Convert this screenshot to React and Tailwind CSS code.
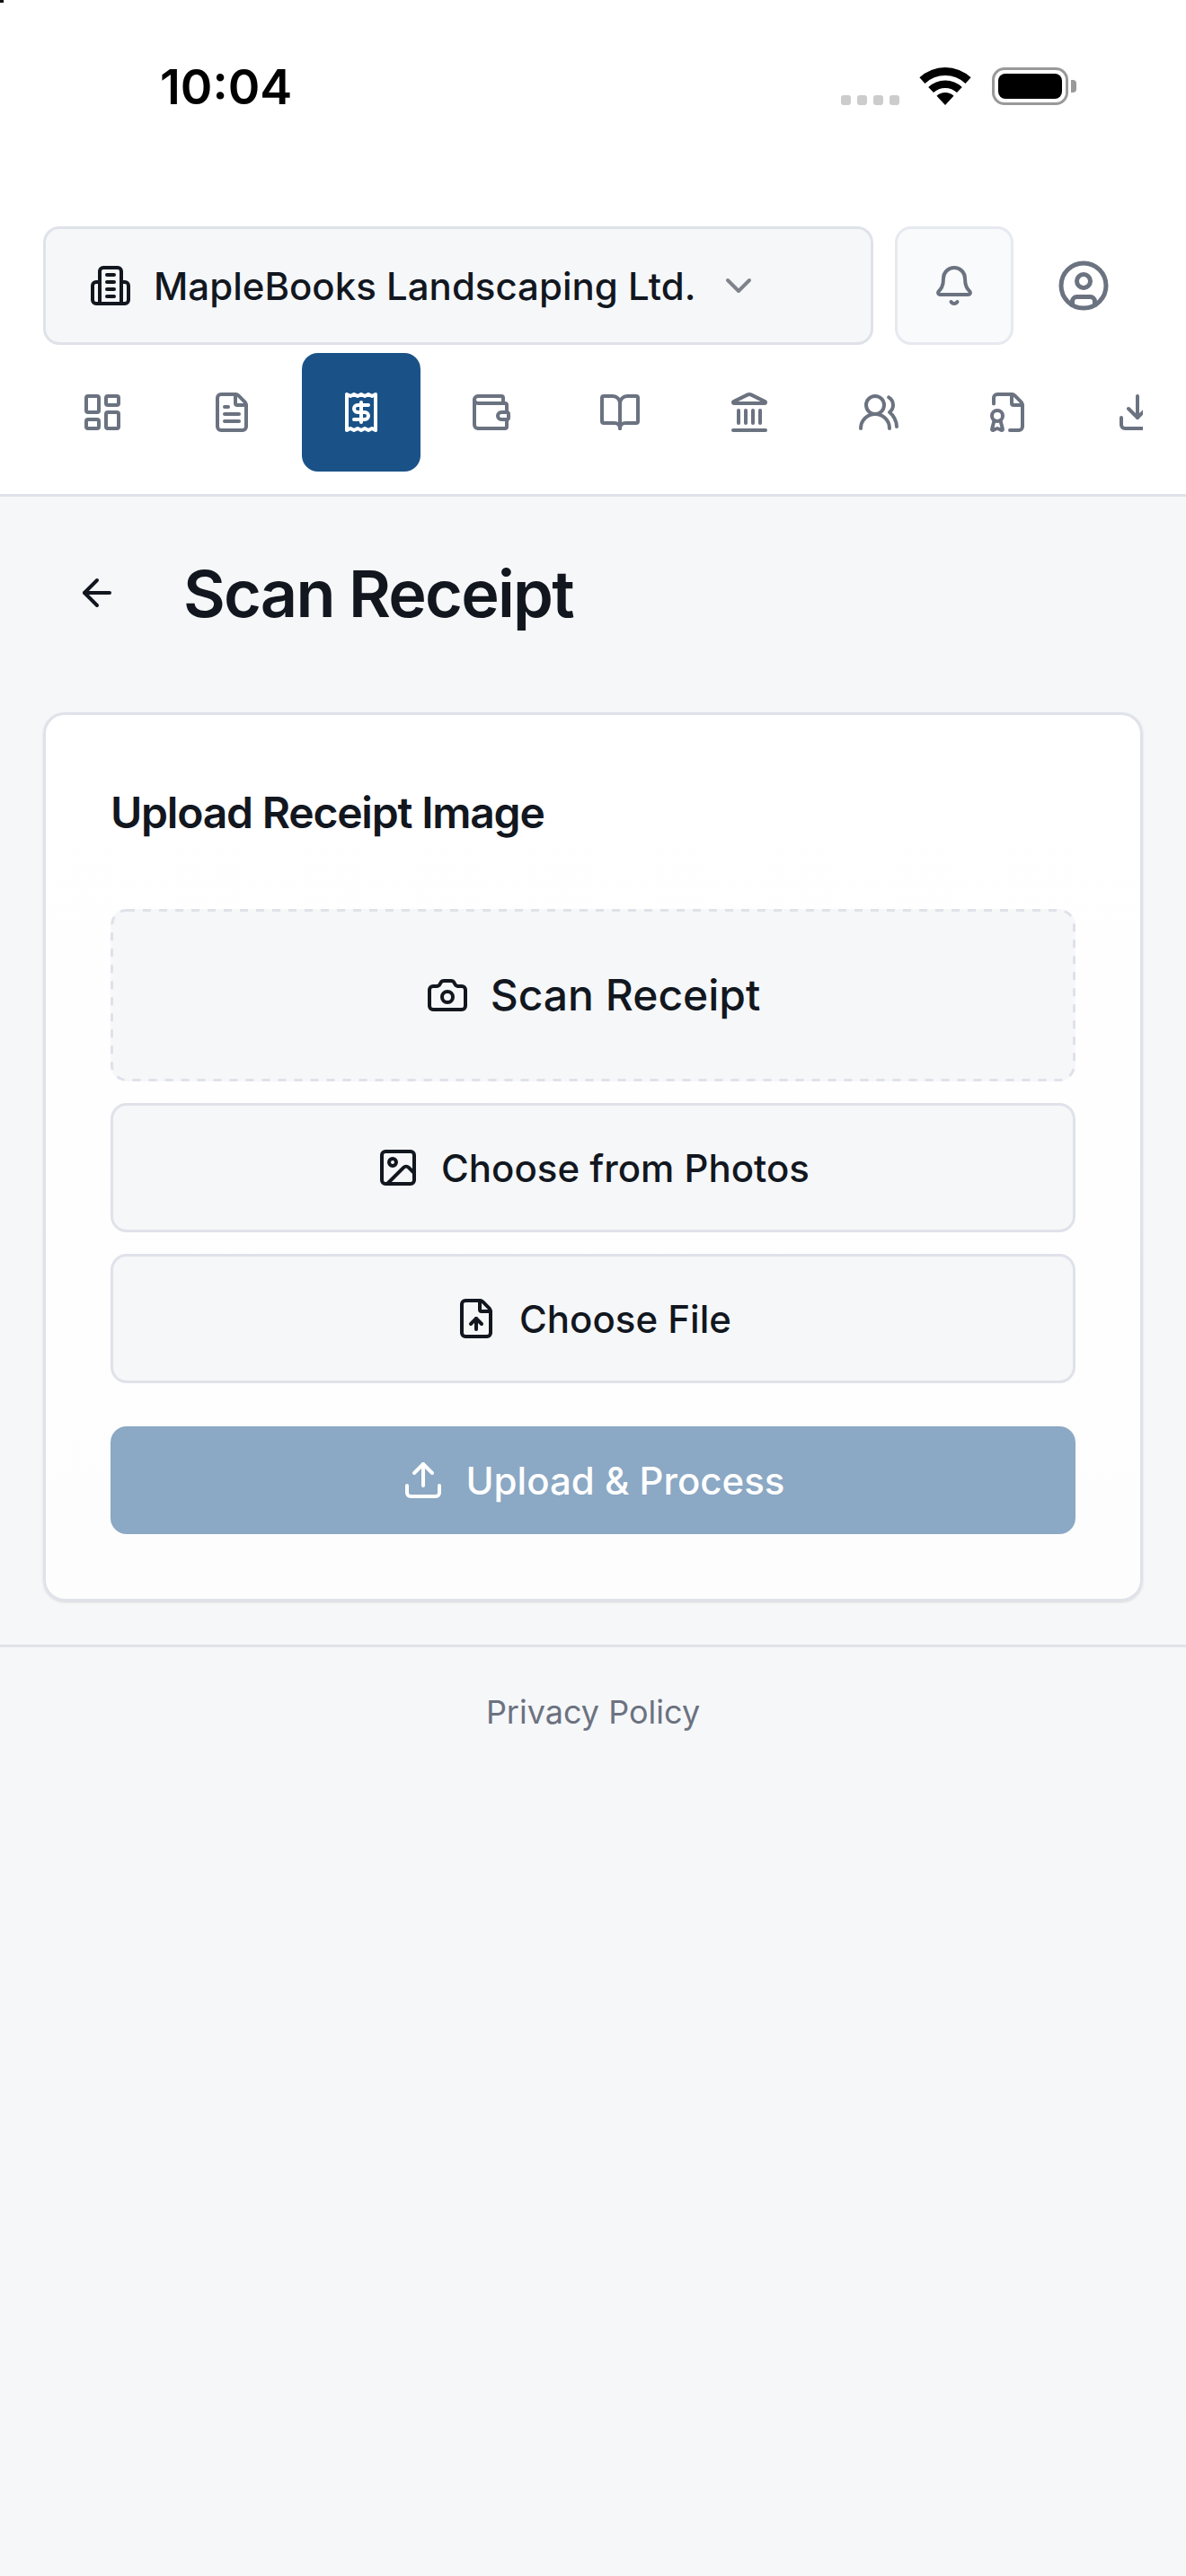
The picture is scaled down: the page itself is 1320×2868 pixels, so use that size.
import React from 'react';
import {
  ArrowLeft,
  Bell,
  BookOpen,
  Camera,
  ChevronDown,
  CircleUser,
  Download,
  FileBadge,
  FileText,
  FileUp,
  Image,
  Landmark,
  LayoutDashboard,
  Receipt,
  Upload,
  UsersRound,
  Wallet,
} from 'lucide-react';

const navItems = [
  { icon: LayoutDashboard },
  { icon: FileText },
  { icon: Receipt, active: true },
  { icon: Wallet },
  { icon: BookOpen },
  { icon: Landmark },
  { icon: UsersRound },
  { icon: FileBadge },
  { icon: Download },
];

const BuildingIcon = () => (
  <svg className="w-12 h-12 shrink-0" viewBox="0 0 24 24" fill="none" stroke="#12171f" strokeWidth="2" strokeLinecap="round" strokeLinejoin="round">
    <path d="M6 22V4a2 2 0 0 1 2-2h8a2 2 0 0 1 2 2v18Z" />
    <path d="M6 10H4a2 2 0 0 0-2 2v8a2 2 0 0 0 2 2h2" />
    <path d="M18 10h2a2 2 0 0 1 2 2v8a2 2 0 0 1-2 2h-2" />
    <path d="M10 6h4" />
    <path d="M10 10h4" />
    <path d="M10 14h4" />
    <path d="M10 18h4" />
  </svg>
);

const WifiIcon = () => (
  <svg className="w-[58px] h-[42px]" viewBox="0 0 58 42" fill="#000">
    <path d="M0.4 11.3A42 42 0 0 1 57.6 11.3L51.5 17.9A33 33 0 0 0 6.5 17.9Z" />
    <path d="M10.2 21.9A27.5 27.5 0 0 1 47.8 21.9L42 28.1A19 19 0 0 0 16 28.1Z" />
    <path d="M19.5 31.8A14 14 0 0 1 38.5 31.8L29 42Z" />
  </svg>
);

const StatusBar = () => (
  <div className="h-[252px] flex justify-between pl-[178px] pr-[122px] pt-[75px]">
    <span className="text-[54px] leading-[44px] font-semibold text-black">10:04</span>
    <div className="flex items-end h-[42px]">
      <div className="flex gap-[7px] mr-[22px]">
        {[0, 1, 2, 3].map((i) => (
          <div key={i} className="w-[11px] h-[11px] rounded-[3px] bg-[#cccccc]" />
        ))}
      </div>
      <WifiIcon />
      <div className="ml-[23px] w-[85px] h-[42px] rounded-[14px] border-[3px] border-[#999999] p-[4px]">
        <div className="w-full h-full rounded-[8px] bg-black" />
      </div>
      <div className="ml-[3px] mb-[14px] w-[6px] h-[14px] rounded-r-[4px] bg-[#999999]" />
    </div>
  </div>
);

const ActionButton = ({ icon: Icon, label, className }) => (
  <button className={`relative w-full flex items-center justify-center gap-6 rounded-[18px] bg-[#f6f7f9] text-[#12171f] font-medium ${className}`}>
    <Icon size={48} strokeWidth={2} className="shrink-0" />
    {label}
  </button>
);

export default function App() {
  return (
    <div className="relative min-h-[2868px] bg-[#f6f7f9] font-['Inter',sans-serif]">
      <div className="absolute top-0 left-0 w-[4px] h-[3px] bg-[#111111]" />
      <header className="bg-white border-b-[3px] border-[#e0e2ea]">
        <StatusBar />
        <div className="flex px-12">
          <div className="flex-1 h-[132px] flex items-center gap-6 pl-12 rounded-[18px] border-[3px] border-[#e0e2ea] bg-[#f6f7f9]">
            <BuildingIcon />
            <span className="text-[42px] font-medium text-[#12171f] whitespace-nowrap">MapleBooks Landscaping Ltd.</span>
            <ChevronDown size={48} strokeWidth={2} className="shrink-0 text-[#7f838b]" />
          </div>
          <button className="ml-6 w-[132px] h-[132px] flex items-center justify-center rounded-[18px] border-[3px] border-[#e7e9f0] bg-[#f9fafb] text-[#6b7280]">
            <Bell size={48} strokeWidth={2} />
          </button>
          <button className="ml-3 w-[132px] h-[132px] flex items-center justify-center text-[#6b7280]">
            <CircleUser size={60} strokeWidth={2} />
          </button>
        </div>
        <nav className="mx-12 mt-[9px] mb-[25px] flex gap-3 overflow-hidden">
          {navItems.map(({ icon: Icon, active }, idx) => (
            <button
              key={idx}
              className={`shrink-0 w-[132px] h-[132px] flex items-center justify-center rounded-[18px] ${active ? 'bg-[#1a5288] text-white' : 'text-[#6b7280]'}`}
            >
              <Icon size={48} strokeWidth={2} />
            </button>
          ))}
        </nav>
      </header>

      <main className="px-12 pt-[59px] pb-12">
        <div className="flex items-center h-[96px] mb-[85px]">
          <button className="w-[120px] h-[96px] flex items-center pl-[36px] text-[#12171f] shrink-0">
            <ArrowLeft size={48} strokeWidth={2} />
          </button>
          <h1 className="ml-[36px] pt-[2px] text-[72px] leading-[96px] font-semibold tracking-tight text-[#12171f]">Scan Receipt</h1>
        </div>

        <section className="rounded-[24px] border-[3px] border-[#e0e2ea] bg-gradient-to-b from-white to-[#fdfdfd] p-[72px] shadow-sm">
          <h2 className="pt-[1px] mb-[71px] text-[48px] leading-[72px] font-semibold tracking-tight text-[#12171f]">Upload Receipt Image</h2>
          <div className="flex flex-col gap-6">
            <ActionButton icon={Camera} label={<>
              Scan Receipt
              <svg className="absolute inset-0 w-full h-full pointer-events-none" fill="none">
                <rect x="1.5" y="1.5" width="1071" height="189" rx="16.5" stroke="#e0e2ea" strokeWidth="3" strokeDasharray="9 9" />
              </svg>
            </>} className="h-[192px] text-[48px]" />
            <ActionButton icon={Image} label="Choose from Photos" className="h-[144px] border-[3px] border-[#e0e2ea] text-[42px]" />
            <ActionButton icon={FileUp} label="Choose File" className="h-[144px] border-[3px] border-[#e0e2ea] text-[42px]" />
          </div>
          <button className="mt-12 w-full h-[120px] flex items-center justify-center gap-6 rounded-[18px] bg-[#8ba8c4] text-white text-[42px] font-medium">
            <Upload size={48} strokeWidth={2} />
            Upload & Process
          </button>
        </section>
      </main>

      <footer className="border-t-[3px] border-[#e0e2ea] pt-[45px] text-center">
        <a className="text-[36px] leading-[54px] text-[#6b7280]">Privacy Policy</a>
      </footer>
    </div>
  );
}
